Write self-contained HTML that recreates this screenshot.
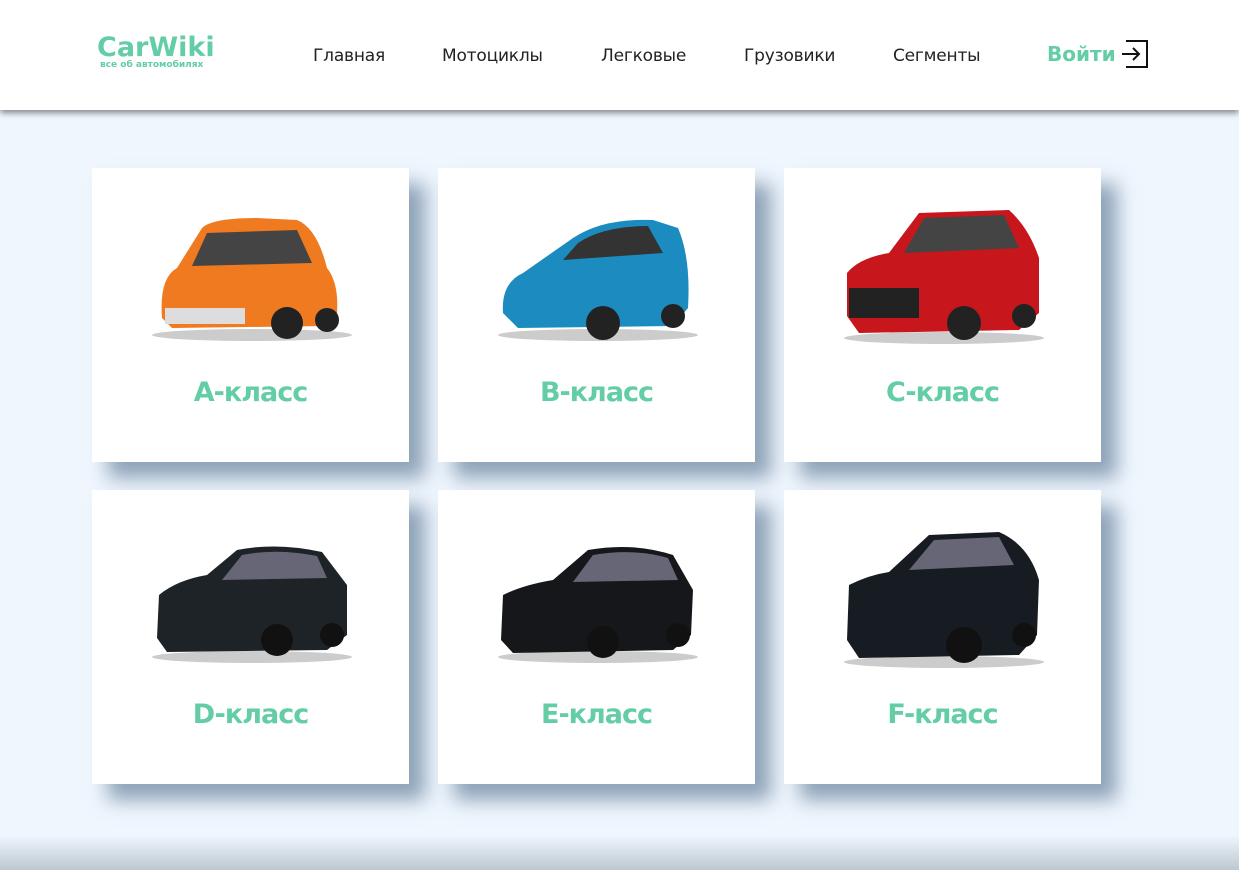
<!DOCTYPE html>
<html><head><meta charset="utf-8"><style>
*{margin:0;padding:0;box-sizing:border-box}
body{width:1239px;height:870px;overflow:hidden;background:#eff6fe;font-family:"DejaVu Sans","Liberation Sans",sans-serif;position:relative}
header{position:absolute;left:0;top:0;width:1239px;height:110px;background:#fff;box-shadow:0 3px 6px rgba(0,0,0,.45);z-index:2}
.logo{position:absolute;left:97px;top:32px;color:#63cda6;font-weight:bold;font-size:27px;letter-spacing:0}
.logo small{position:absolute;left:3px;top:28px;font-size:9px;white-space:nowrap}
nav a{position:absolute;top:46px;font-size:17px;color:#222;text-decoration:none;white-space:nowrap;letter-spacing:-0.2px}
.login{position:absolute;left:1047px;top:42px;color:#63cda6;font-weight:bold;font-size:20px}
.card{position:absolute;width:317px;height:294px;background:#fff;box-shadow:16px 16px 18px rgba(110,135,160,.75)}
.card .t{position:absolute;left:0;right:0;top:209px;text-align:center;color:#63cda6;font-size:27px;font-weight:bold;letter-spacing:-1px}
.card svg{position:absolute;left:55px;top:30px}
.bot{position:absolute;left:0;bottom:0;width:1239px;height:35px;background:linear-gradient(#eff6fe,#bdc8d1)}
</style></head><body>
<header>
<div class="logo">CarWiki<small>все об автомобилях</small></div>
<nav><a style="left:313px">Главная</a><a style="left:442px">Мотоциклы</a><a style="left:601px">Легковые</a><a style="left:744px">Грузовики</a><a style="left:893px">Сегменты</a></nav>
<div class="login">Войти</div>
<svg style="position:absolute;left:1120px;top:39px" width="30" height="30" viewBox="0 0 30 30" fill="none" stroke="#111" stroke-width="2"><path d="M6 2H27V28H6"/><path d="M2 15H19M13 9l6 6-6 6"/></svg>
</header>

<div class="card" style="left:92px;top:168px"><svg width="210" height="150" viewBox="0 0 210 150"><ellipse cx="105" cy="137" rx="100" ry="6" fill="#ccc"/><path d="M15 120 Q12 80 30 70 L55 30 Q65 20 110 20 L150 22 Q170 30 180 70 Q192 85 190 115 L180 128 L25 130Z" fill="#f07a1f"/><path d="M60 35 L150 32 L165 65 L45 68Z" fill="#444"/><rect x="18" y="110" width="80" height="16" fill="#ddd"/><circle cx="140" cy="125" r="16" fill="#222"/><circle cx="180" cy="122" r="12" fill="#222"/></svg><div class="t">A-класс</div></div>
<div class="card" style="left:438px;top:168px"><svg width="210" height="150" viewBox="0 0 210 150"><ellipse cx="105" cy="137" rx="100" ry="6" fill="#ccc"/><path d="M10 115 Q8 85 30 75 L80 40 Q110 20 160 22 L185 30 Q198 60 195 110 L180 128 L25 130Z" fill="#1c8cc0"/><path d="M85 45 Q110 28 155 28 L170 55 L70 62Z" fill="#333"/><circle cx="110" cy="125" r="17" fill="#222"/><circle cx="180" cy="118" r="12" fill="#222"/></svg><div class="t">B-класс</div></div>
<div class="card" style="left:784px;top:168px"><svg width="210" height="150" viewBox="0 0 210 150"><ellipse cx="105" cy="140" rx="100" ry="6" fill="#ccc"/><path d="M8 118 L8 75 Q20 60 50 55 L80 15 L170 12 Q190 30 200 60 L200 115 L180 132 L20 135Z" fill="#c8161d"/><path d="M85 20 L165 17 L180 50 L65 55Z" fill="#444"/><rect x="10" y="90" width="70" height="30" fill="#222"/><circle cx="125" cy="125" r="17" fill="#222"/><circle cx="185" cy="118" r="12" fill="#222"/></svg><div class="t">C-класс</div></div>
<div class="card" style="left:92px;top:490px"><svg width="210" height="150" viewBox="0 0 210 150"><ellipse cx="105" cy="137" rx="100" ry="6" fill="#ccc"/><path d="M10 118 L12 75 Q30 60 60 55 L90 30 Q130 22 175 32 L200 65 L200 115 L180 130 L20 132Z" fill="#1e2328"/><path d="M95 35 Q130 28 170 36 L180 58 L75 60Z" fill="#667"/><circle cx="130" cy="120" r="16" fill="#111"/><circle cx="185" cy="115" r="12" fill="#111"/></svg><div class="t">D-класс</div></div>
<div class="card" style="left:438px;top:490px"><svg width="210" height="150" viewBox="0 0 210 150"><ellipse cx="105" cy="137" rx="100" ry="6" fill="#ccc"/><path d="M8 120 L10 75 Q30 65 60 60 L95 30 Q140 22 180 35 L200 70 L198 115 L180 130 L20 133Z" fill="#15171a"/><path d="M100 35 Q140 28 175 38 L185 60 L80 62Z" fill="#667"/><circle cx="110" cy="122" r="16" fill="#111"/><circle cx="185" cy="115" r="12" fill="#111"/></svg><div class="t">E-класс</div></div>
<div class="card" style="left:784px;top:490px"><svg width="210" height="150" viewBox="0 0 210 150"><ellipse cx="105" cy="142" rx="100" ry="6" fill="#ccc"/><path d="M8 120 L10 65 Q30 55 50 52 L90 15 L160 12 Q190 25 200 60 L198 115 L180 135 L20 138Z" fill="#171b22"/><path d="M95 20 L160 17 L175 45 L70 50Z" fill="#667"/><circle cx="125" cy="125" r="18" fill="#111"/><circle cx="185" cy="115" r="12" fill="#111"/></svg><div class="t">F-класс</div></div>
<div class="bot"></div>
</body></html>
